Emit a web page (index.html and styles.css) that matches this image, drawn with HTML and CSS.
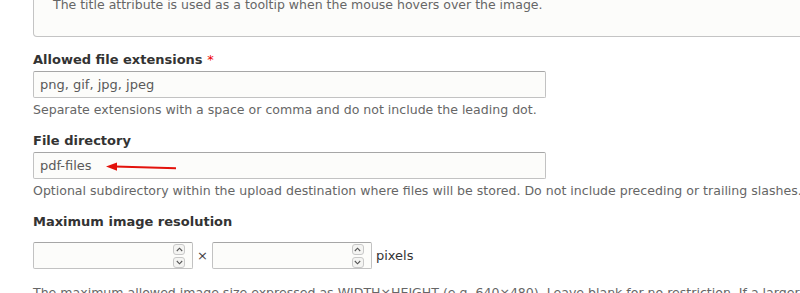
FILE: index.html
```html
<!DOCTYPE html>
<html>
<head>
  <title>Image field settings</title>
  <link rel="stylesheet" href="styles.css">
</head>
<body>
  <div class="page">

    <!-- Title field description (scrolled partly out of view) -->
    <div class="panel">
      <div class="panel-text">The title attribute is used as a tooltip when the mouse hovers over the image.</div>
    </div>

    <div class="form-item">
      <label>Allowed file extensions <span class="required">*</span></label>
      <div class="text-input">png, gif, jpg, jpeg</div>
      <div class="description">Separate extensions with a space or comma and do not include the leading dot.</div>
    </div>

    <div class="form-item">
      <label>File directory</label>
      <div class="text-input annotated">
        pdf-files
        <svg class="arrow" width="72" height="12" viewBox="0 0 72 12">
          <line x1="9" y1="5.6" x2="70" y2="7.2" stroke="#e3120b" stroke-width="2"/>
          <polygon points="0,5.4 11,1.4 11,9.8" fill="#e3120b"/>
        </svg>
      </div>
      <div class="description">Optional subdirectory within the upload destination where files will be stored. Do not include preceding or trailing slashes.</div>
    </div>

    <div class="form-item">
      <label>Maximum image resolution</label>
      <div class="resolution">
        <div class="number-input">
          <div class="spinner">
            <span class="spin">
              <svg width="7" height="5" viewBox="0 0 7 5"><polyline points="0.8,4 3.5,1.2 6.2,4" fill="none" stroke="#555" stroke-width="1.1"/></svg>
            </span>
            <span class="spin">
              <svg width="7" height="5" viewBox="0 0 7 5"><polyline points="0.8,1 3.5,3.8 6.2,1" fill="none" stroke="#555" stroke-width="1.1"/></svg>
            </span>
          </div>
        </div>
        <span class="times">&times;</span>
        <div class="number-input">
          <div class="spinner">
            <span class="spin">
              <svg width="7" height="5" viewBox="0 0 7 5"><polyline points="0.8,4 3.5,1.2 6.2,4" fill="none" stroke="#555" stroke-width="1.1"/></svg>
            </span>
            <span class="spin">
              <svg width="7" height="5" viewBox="0 0 7 5"><polyline points="0.8,1 3.5,3.8 6.2,1" fill="none" stroke="#555" stroke-width="1.1"/></svg>
            </span>
          </div>
        </div>
        <span class="unit">pixels</span>
      </div>
      <div class="description">The maximum allowed image size expressed as WIDTH&times;HEIGHT (e.g. 640&times;480). Leave blank for no restriction. If a larger image is uploaded, it will be resized to reflect the given width and height.</div>
    </div>

  </div>
</body>
</html>
```

FILE: styles.css
```css
html, body {
  margin: 0;
  padding: 0;
  background: #fff;
  overflow: hidden;
}

body {
  font-family: "DejaVu Sans", sans-serif;
  color: #333;
  width: 800px;
  height: 293px;
}

.page {
  padding-left: 33px;
}

.panel {
  width: 900px;
  margin-top: -4px;
  padding: 0 0 22px 19px;
  background: #fcfcfa;
  border: 1px solid #c4c4c4;
  border-top: none;
  border-radius: 0 0 4px 4px;
}

.panel-text {
  font-size: 12.5px;
  line-height: 18px;
  color: #666;
}

.form-item {
  margin-top: 14px;
}

label {
  display: block;
  font-size: 13px;
  line-height: 18px;
  font-weight: bold;
  color: #333;
  margin-bottom: 2px;
}

.required {
  color: #e00;
  font-weight: normal;
}

.text-input {
  box-sizing: border-box;
  width: 513px;
  height: 27px;
  padding: 0 6px;
  font-size: 13px;
  line-height: 25px;
  color: #595959;
  background: #fcfcfa;
  border: 1px solid #c2c2c2;
  border-top-color: #a6a6a6;
  border-radius: 2px;
}

.annotated {
  position: relative;
}

.arrow {
  position: absolute;
  left: 72px;
  top: 8px;
}

.description {
  font-size: 12.55px;
  line-height: 17px;
  color: #666;
  margin-top: 3px;
  white-space: nowrap;
}

.resolution {
  display: flex;
  align-items: center;
  margin-top: 11px;
}

.number-input {
  box-sizing: border-box;
  width: 160px;
  height: 27px;
  display: flex;
  justify-content: flex-end;
  align-items: center;
  padding-right: 7px;
  background: #fcfcfa;
  border: 1px solid #c2c2c2;
  border-top-color: #a6a6a6;
  border-radius: 2px;
}

.spinner {
  display: flex;
  flex-direction: column;
  gap: 2px;
}

.spin {
  box-sizing: border-box;
  width: 12px;
  height: 11px;
  display: flex;
  align-items: center;
  justify-content: center;
  border: 1px solid #c8c8c8;
  border-radius: 3px;
  background: #f4f4f2;
}

.times {
  font-size: 13px;
  color: #444;
  margin: 0 4px;
}

.unit {
  font-size: 13px;
  color: #333;
  margin-left: 4px;
}

.resolution + .description {
  margin-top: 15px;
}
```
